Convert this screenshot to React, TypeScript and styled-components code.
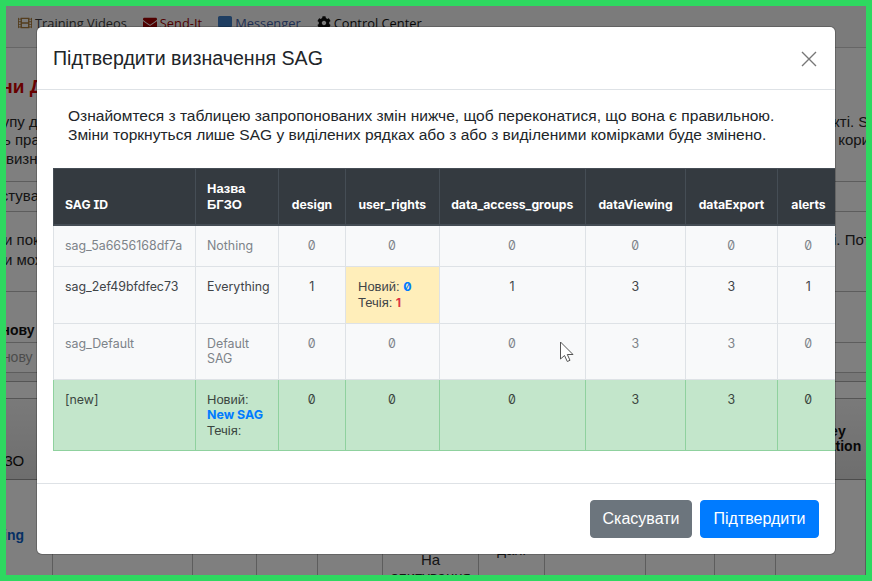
import styled, { createGlobalStyle } from "styled-components";
import { FaCog, FaCommentAlt, FaEnvelope, FaFilm } from "react-icons/fa";

const GlobalStyle = createGlobalStyle`
  html, body { margin: 0; padding: 0; background: #fff; }
  * { box-sizing: border-box; }
`;

const Frame = styled.div`
  position: relative;
  width: 872px;
  height: 581px;
  border: 6px solid #2ed860;
  overflow: hidden;
  background: #fff;
  font-family: "Liberation Sans", Arial, sans-serif;
  color: #2a2a2a;
`;

/* page behind the dialog */
const Page = styled.div`
  display: flex;
  flex-direction: column;
  width: 860px;
  height: 569px;
  & > * { flex-shrink: 0; }
`;

const Nav = styled.nav`
  display: flex;
  align-items: center;
  gap: 16px;
  height: 42px;
  padding: 0 0 8px 12px;
  background: #f6f6f6;
  border-bottom: 1px solid #ccc;
  font-family: "Open Sans", sans-serif;
  font-size: 12.85px;
`;

const NavItem = styled.span<{ $color: string }>`
  display: inline-flex;
  align-items: center;
  gap: 3px;
  color: ${(p) => p.$color};
  svg { flex: none; }
`;

const Heading = styled.h1`
  margin: 27px 0 0 -36px;
  font-size: 19px;
  line-height: 24px;
  font-weight: 700;
  color: #d00000;
  white-space: nowrap;
`;

const TextRow = styled.div<{ $height: number; $left: number; $right: number }>`
  display: flex;
  justify-content: space-between;
  height: ${(p) => p.$height}px;
  margin: 0 ${(p) => p.$right}px 0 ${(p) => p.$left}px;
  font-size: 15px;
  line-height: ${(p) => p.$height}px;
  white-space: nowrap;
`;

const Intro = styled.div`
  margin-top: 13px;
`;

const ToolRow = styled.div`
  height: 31px;
  margin-top: 13px;
  border-top: 1px solid #bbb;
  border-bottom: 1px solid #bbb;
  font-size: 15px;
  line-height: 27px;
  overflow: hidden;
  white-space: nowrap;
  text-indent: -39px;
`;

const Para = styled.div`
  margin-top: 18px;
  padding-bottom: 21px;
  border-bottom: 1px solid #bbb;
`;

const SubHead = styled.div`
  height: 51px;
  padding-top: 28px;
  border-bottom: 1px solid #bbb;
  font-size: 14px;
  font-weight: 700;
  line-height: 20px;
  text-indent: -59px;
  white-space: nowrap;
  color: #111;
`;

const InputLine = styled.div`
  height: 30px;
  border-bottom: 1px solid #bbb;
  color: #999;
  font-size: 14px;
  line-height: 28px;
  text-indent: -54px;
  white-space: nowrap;
`;

const Strip = styled.div`
  height: 9px;
  background: #eee;
  border-bottom: 1px solid #aaa;
`;

const Spacer = styled.div`
  height: 17px;
  border-bottom: 1px solid #aaa;
`;

const GridHead = styled.div`
  display: flex;
  justify-content: space-between;
  align-items: flex-end;
  height: 81px;
  padding-bottom: 10px;
  background: linear-gradient(#f4f4f4, #dcdcdc);
  border-bottom: 1px solid #999;
`;

const HeadLeft = styled.span`
  margin-left: -20px;
  font-size: 15px;
  color: #111;
`;

const HeadRight = styled.span`
  width: 67px;
  font-weight: 700;
  font-size: 14px;
  line-height: 15px;
  color: #111;
  white-space: nowrap;
`;

const GridBody = styled.div`
  display: grid;
  grid-template-columns: 47px 140px 64px 61px 65px 96px 66px 101px 69px 61px 1fr;
  flex: 1;
  min-height: 0;
  overflow: hidden;
`;

const GridCell = styled.div`
  border-right: 1px solid #bbb;
  font-size: 15px;
  text-align: center;
  line-height: 17px;
  overflow: hidden;
`;

const LinkCell = styled(GridCell)`
  display: flex;
  justify-content: flex-end;
  padding: 47px 28px 0 0;
  color: #0a5fc8;
  font-weight: 700;
  font-size: 14px;
  white-space: nowrap;
`;

const TallText = styled.div<{ $top: number }>`
  padding-top: ${(p) => p.$top}px;
`;

/* dialog */
const Backdrop = styled.div`
  position: absolute;
  inset: 0;
  padding: 21px 0 0 31px;
  background: rgba(0, 0, 0, 0.5);
`;

const Dialog = styled.div`
  display: flex;
  flex-direction: column;
  width: 798px;
  height: 527px;
  background: #fff;
  border-radius: 5px;
  box-shadow: 0 0 0 1px rgba(0, 0, 0, 0.2);
  overflow: hidden;
  color: #212529;
`;

const DialogHeader = styled.header`
  display: flex;
  justify-content: space-between;
  height: 63px;
  padding: 16px;
  border-bottom: 1px solid #dee2e6;
`;

const Title = styled.h5`
  margin: 0;
  font-size: 19.6px;
  font-weight: 400;
  line-height: 30px;
`;

const CloseButton = styled.button`
  width: 16px;
  height: 16px;
  margin: 8px 2px 0 0;
  padding: 0;
  border: 0;
  background: none;
  color: #777;
`;

const DialogBody = styled.div`
  flex: 1;
  padding: 16px 0 0 16px;
  overflow: hidden;
`;

const Lead = styled.p`
  margin: 0 0 24px;
  padding-left: 15px;
  font-size: 15.54px;
  line-height: 19px;
  color: #212529;
  white-space: nowrap;
`;

const Table = styled.table`
  width: 786px;
  table-layout: fixed;
  border-collapse: collapse;
  font-family: Inter, "Liberation Sans", sans-serif;
  font-size: 12.4px;
  line-height: 15.5px;
  font-feature-settings: "ss02", "zero", "cv08";
  & tr > :first-child { padding-left: 11px; }
`;

const Col = styled.col<{ $w: number }>`
  width: ${(p) => p.$w}px;
`;

const Th = styled.th<{ $center?: boolean }>`
  padding: 12px 12px 12px 11.5px;
  background: #343a40;
  color: #fff;
  font-size: 12.2px;
  font-weight: 700;
  vertical-align: bottom;
  text-align: left;
  border: 1px solid #454d55;
  border-bottom-width: 2px;
  white-space: ${(p) => (p.$center ? "nowrap" : "normal")};
  ${(p) => p.$center && "padding-left: 0; padding-right: 0; text-align: center;"}
`;

const Ua = styled.span`
  font-family: "Liberation Sans", Arial, sans-serif;
  font-size: 13px;
`;

const Tr = styled.tr<{ $tone: "muted" | "plain" | "added" }>`
  background: ${(p) => (p.$tone === "added" ? "#c3e6cb" : "#f8f9fa")};
  color: ${(p) => (p.$tone === "muted" ? "#7d8389" : p.$tone === "added" ? "#3a4540" : "#3f4448")};
`;

const Td = styled.td<{ $center?: boolean; $added?: boolean }>`
  padding: 12px 12px 12px 11.5px;
  vertical-align: top;
  text-align: ${(p) => (p.$center ? "center" : "left")};
  border: 1px solid ${(p) => (p.$added ? "#8fd19e" : "#dee2e6")};
`;

const ChangedTd = styled(Td)`
  padding: 12px 12px 11px;
  background: #ffeeba;
  line-height: 16.5px;
`;

const NewValue = styled.b`
  color: #007bff;
  white-space: nowrap;
`;

const OldValue = styled.b`
  color: #dc3545;
`;

const DialogFooter = styled.footer`
  display: flex;
  justify-content: flex-end;
  gap: 8px;
  height: 71px;
  padding: 16px;
  border-top: 1px solid #dee2e6;
`;

const Button = styled.button<{ $primary?: boolean }>`
  height: 38px;
  padding: 0 ${(p) => (p.$primary ? "12.5px" : "11.5px")};
  border: 1px solid ${(p) => (p.$primary ? "#007bff" : "#6c757d")};
  border-radius: 4px;
  background: ${(p) => (p.$primary ? "#007bff" : "#6c757d")};
  color: #fff;
  font-family: "Liberation Sans", Arial, sans-serif;
  font-size: 16px;
`;

const Cursor = styled.svg`
  position: absolute;
  left: 553px;
  top: 335px;
`;

const columns = [141.5, 83.5, 67, 93.5, 146.5, 100, 92, 62];
const permissionHeads = ["design", "user_rights", "data_access_groups", "dataViewing", "dataExport", "alerts"];

export default function App() {
  return (
    <>
      <GlobalStyle />
      <Frame>
        <Page>
          <Nav>
            <NavItem $color="#3a3a3a">
              <FaFilm size={14} color="#a87a3a" />
              Training Videos
            </NavItem>
            <NavItem $color="#a00000">
              <FaEnvelope size={14} />
              Send-It
            </NavItem>
            <NavItem $color="#3f5fa8">
              <FaCommentAlt size={14} color="#3f7cc4" />
              Messenger
            </NavItem>
            <NavItem $color="#111">
              <FaCog size={14} />
              Control Center
            </NavItem>
          </Nav>
          <Heading>Зміни Доступу Даних</Heading>
          <Intro>
            <TextRow $height={19} $left={-18} $right={-24}>
              <span>групу даних у проекті</span>
              <span>у цьому проекті. SAG</span>
            </TextRow>
            <TextRow $height={18} $left={-3} $right={-58}>
              <span>ь права для користувачів</span>
              <span>до користувача</span>
            </TextRow>
            <TextRow $height={19} $left={0} $right={0}>
              <span>визначення</span>
              <span />
            </TextRow>
          </Intro>
          <ToolRow>Користування</ToolRow>
          <Para>
            <TextRow $height={20} $left={-2} $right={-18}>
              <span>и показує права</span>
              <span>у таблиці. Потім</span>
            </TextRow>
            <TextRow $height={20} $left={-2} $right={0}>
              <span>и можете змінити</span>
              <span />
            </TextRow>
          </Para>
          <SubHead>Додати нову</SubHead>
          <InputLine>Додати нову</InputLine>
          <Strip />
          <Spacer />
          <GridHead>
            <HeadLeft>БГЗО</HeadLeft>
            <HeadRight>
              Survey
              <br />
              Invitation
              <br />
              Tools
            </HeadRight>
          </GridHead>
          <GridBody>
            <LinkCell>Training</LinkCell>
            <GridCell />
            <GridCell />
            <GridCell />
            <GridCell />
            <GridCell>
              <TallText $top={71}>
                На
                <br />
                опитування
              </TallText>
            </GridCell>
            <GridCell>
              <TallText $top={61}>дані</TallText>
            </GridCell>
            <GridCell />
            <GridCell />
            <GridCell />
            <GridCell />
          </GridBody>
        </Page>

        <Backdrop>
          <Dialog>
            <DialogHeader>
              <Title>Підтвердити визначення SAG</Title>
              <CloseButton aria-label="Close">
                <svg width="16" height="16" viewBox="0 0 16 16">
                  <path d="M1 1l14 14M15 1L1 15" stroke="currentColor" strokeWidth="1.4" fill="none" />
                </svg>
              </CloseButton>
            </DialogHeader>
            <DialogBody>
              <Lead>
                Ознайомтеся з таблицею запропонованих змін нижче, щоб переконатися, що вона є правильною.
                <br />
                Зміни торкнуться лише SAG у виділених рядках або з або з виділеними комірками буде змінено.
              </Lead>
              <Table>
                <colgroup>
                  {columns.map((w, i) => (
                    <Col key={i} $w={w} />
                  ))}
                </colgroup>
                <thead>
                  <tr>
                    <Th>SAG ID</Th>
                    <Th>
                      <Ua>Назва БГЗО</Ua>
                    </Th>
                    {permissionHeads.map((h) => (
                      <Th key={h} $center>
                        {h}
                      </Th>
                    ))}
                  </tr>
                </thead>
                <tbody>
                  <Tr $tone="muted">
                    <Td>sag_5a6656168df7a</Td>
                    <Td>Nothing</Td>
                    {[0, 1, 2, 3, 4, 5].map((i) => (
                      <Td key={i} $center>
                        0
                      </Td>
                    ))}
                  </Tr>
                  <Tr $tone="plain">
                    <Td>sag_2ef49bfdfec73</Td>
                    <Td>Everything</Td>
                    <Td $center>1</Td>
                    <ChangedTd>
                      <Ua>Новий:</Ua> <NewValue>0</NewValue>
                      <br />
                      <Ua>Течія:</Ua> <OldValue>1</OldValue>
                    </ChangedTd>
                    <Td $center>1</Td>
                    <Td $center>3</Td>
                    <Td $center>3</Td>
                    <Td $center>1</Td>
                  </Tr>
                  <Tr $tone="muted">
                    <Td>sag_Default</Td>
                    <Td>Default SAG</Td>
                    <Td $center>0</Td>
                    <Td $center>0</Td>
                    <Td $center>0</Td>
                    <Td $center>3</Td>
                    <Td $center>3</Td>
                    <Td $center>0</Td>
                  </Tr>
                  <Tr $tone="added">
                    <Td $added>[new]</Td>
                    <Td $added>
                      <Ua>Новий:</Ua>
                      <br />
                      <NewValue>New SAG</NewValue>
                      <br />
                      <Ua>Течія:</Ua>
                    </Td>
                    <Td $added $center>0</Td>
                    <Td $added $center>0</Td>
                    <Td $added $center>0</Td>
                    <Td $added $center>3</Td>
                    <Td $added $center>3</Td>
                    <Td $added $center>0</Td>
                  </Tr>
                </tbody>
              </Table>
            </DialogBody>
            <DialogFooter>
              <Button>Скасувати</Button>
              <Button $primary>Підтвердити</Button>
            </DialogFooter>
          </Dialog>
        </Backdrop>

        <Cursor width="16" height="22" viewBox="0 0 16 22">
          <path d="M1.5 1v17l4-3.5 2.8 6 2.7-1.2-2.7-5.8H14z" fill="#fff" stroke="#555" strokeWidth="1" />
        </Cursor>
      </Frame>
    </>
  );
}
